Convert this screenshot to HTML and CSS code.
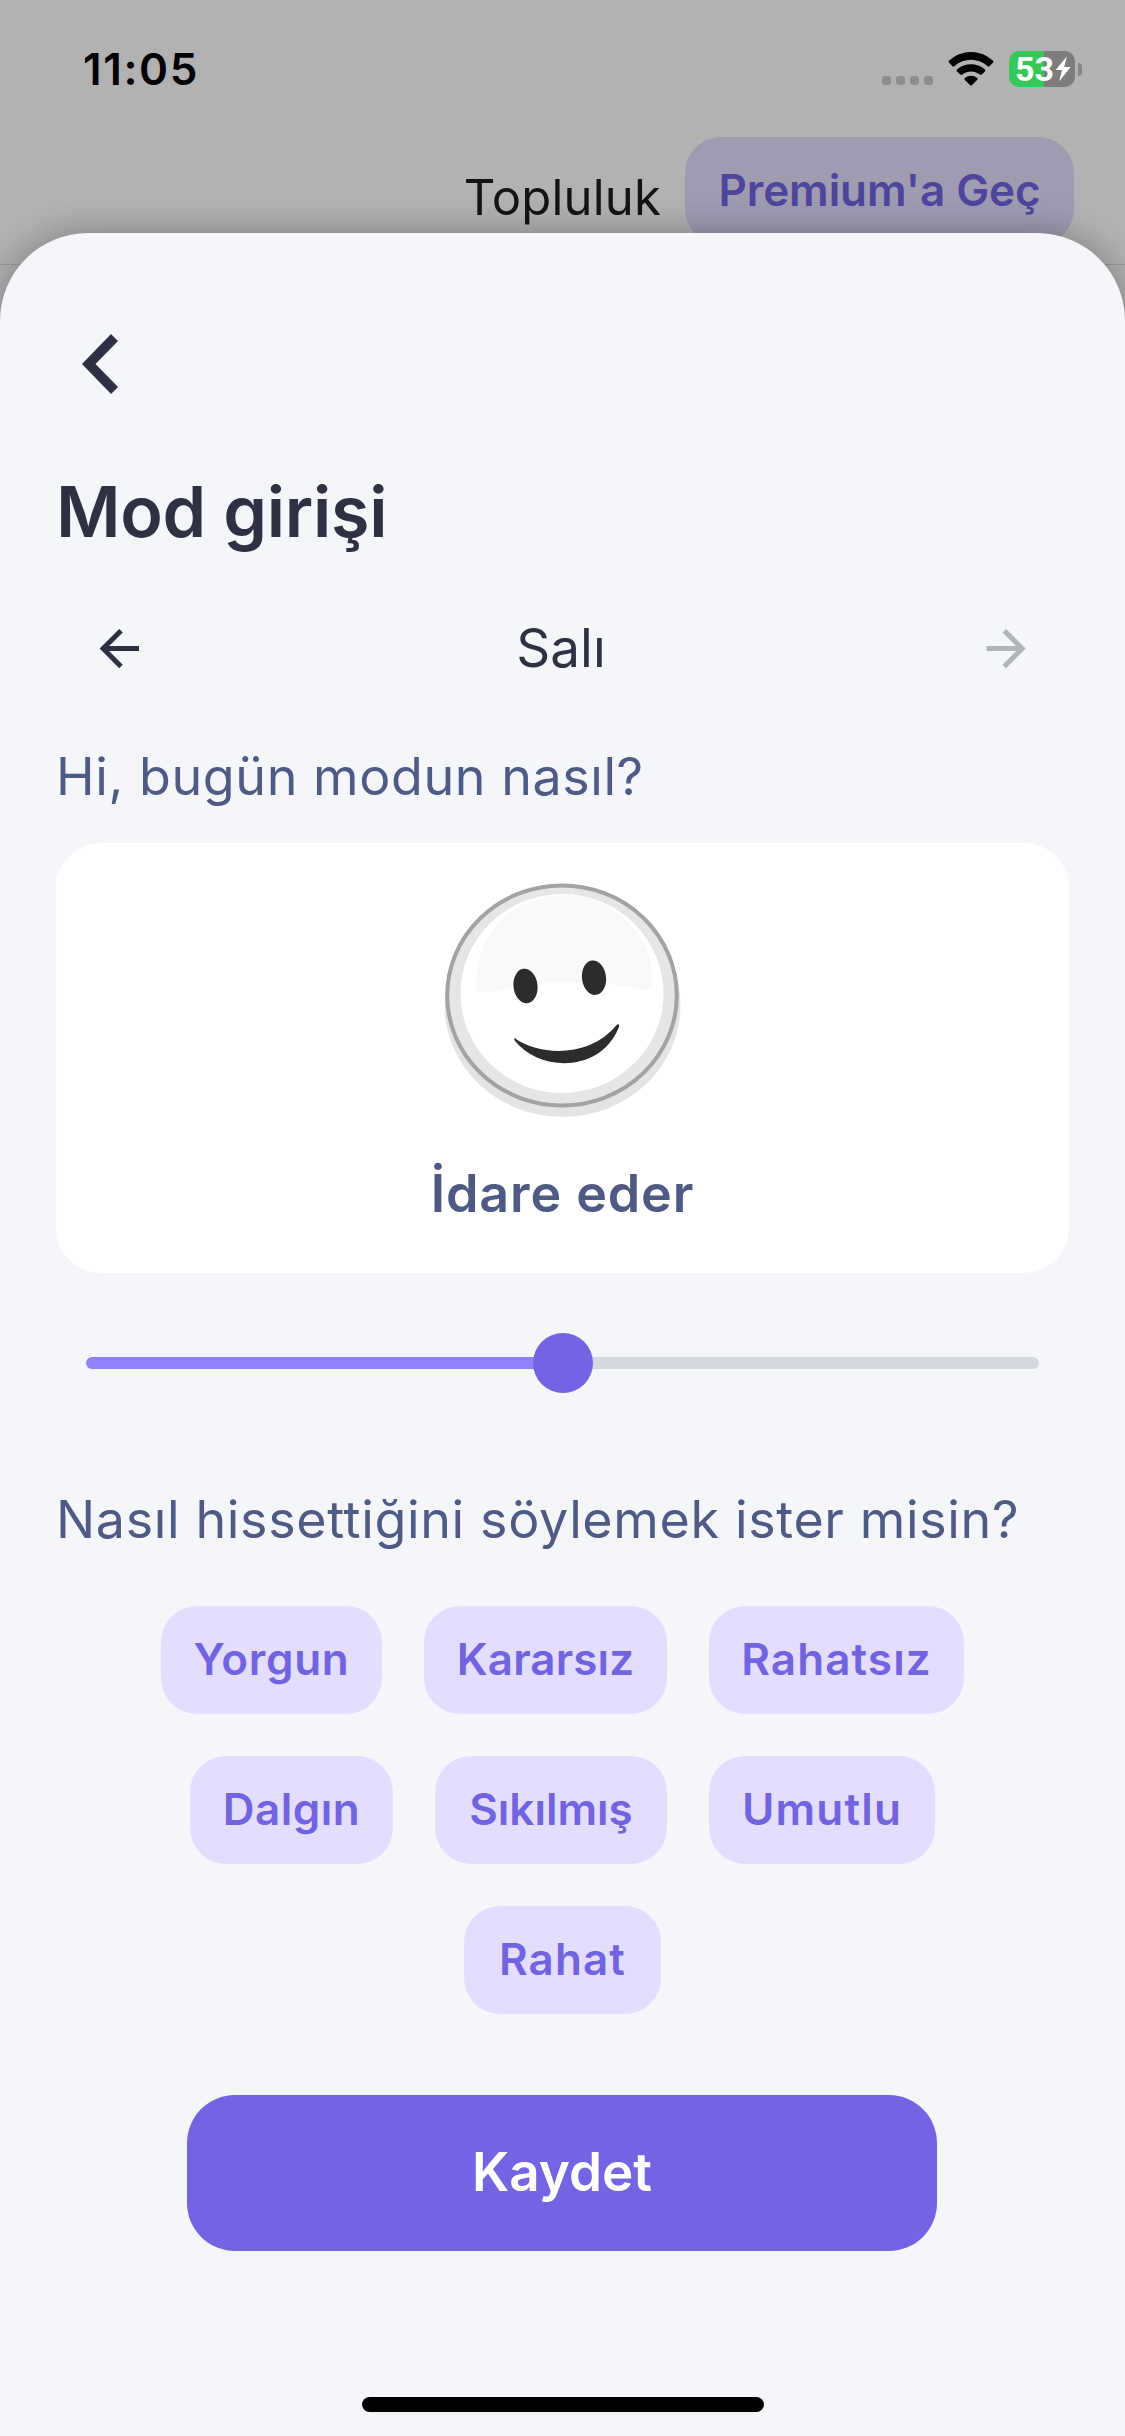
FILE: index.html
```html
<!DOCTYPE html>
<html lang="tr">
<head>
<meta charset="utf-8">
<title>Mod girişi</title>
<link rel="stylesheet" href="styles.css">
</head>
<body>
<div class="screen">
  <header class="status">
    <span class="time">11:05</span>
    <div class="indicators">
      <span class="signal"><i></i><i></i><i></i><i></i></span>
      <svg class="wifi" viewBox="0 0 46 34" width="46" height="34">
        <path d="M1.200 10.700Q0 9.700 1.200 8.600C14 -2.900 32 -2.900 44.800 8.600Q46 9.700 44.800 10.700L41.700 14Q40.700 15 39.500 14C30 5.600 16 5.600 6.500 14Q5.300 15 4.300 14Z"/>
        <path d="M9 19.400Q8 18.400 9.200 17.300C17 10.600 29 10.600 36.800 17.300Q38 18.400 37 19.400L33.700 22.600Q32.700 23.500 31.600 22.600C26.500 18.600 19.500 18.600 14.400 22.600Q13.300 23.500 12.300 22.600Z"/>
        <path d="M16.700 27.800Q15.700 26.800 16.900 25.900C20.500 23 25.500 23 29.100 25.900Q30.300 26.800 29.300 27.800L24 33Q23 34 22 33Z"/>
      </svg>
      <div class="battery">
        <div class="battery-body"><span class="battery-value">53</span>
          <svg class="bolt" viewBox="0 0 16 26" width="16" height="26"><path d="M11.800 0.500L0.600 14H7L4.200 25.500L15.600 11H9.200Z"/></svg>
        </div>
        <i class="battery-cap"></i>
      </div>
    </div>
  </header>
  <nav class="topbar">
    <span class="community">Topluluk</span>
    <span class="premium">Premium'a Geç</span>
  </nav>

  <main class="sheet">
    <svg class="back" viewBox="0 0 36 60" width="36" height="60"><path d="M29 0L36 7L13.500 30L36 53L29 60L0 30Z"/></svg>
    <h1 class="title">Mod girişi</h1>
    <div class="day">
      <svg class="arrow" viewBox="0 0 40 40" width="40" height="40"><path d="M40 19.600H6M22 1.700L4.100 19.600L22 37.500"/></svg>
      <span class="day-name">Salı</span>
      <svg class="arrow arrow-off" viewBox="0 0 40 40" width="40" height="40"><path d="M0.500 19.600H34M18.300 1.700L36.200 19.600L18.300 37.500"/></svg>
    </div>
    <h2 class="question">Hi, bugün modun nasıl?</h2>
    <section class="card">
      <svg class="face" viewBox="0 0 240 236" width="240" height="236">
        <ellipse cx="119.500" cy="122" rx="118" ry="112" fill="#e4e4e4"/>
        <ellipse cx="119" cy="112.500" rx="114.800" ry="110" fill="#e6e6e6" stroke="#a3a3a3" stroke-width="4"/>
        <ellipse cx="119" cy="110.500" rx="101.500" ry="99.500" fill="#fff"/>
        <path d="M33 107C31 60 60 15 119 12C180 13 208 60 210 93C210 103 206 107 196 107C170 96 80 96 53 108C45 109 38 109 33 107Z" fill="#f9f9f9"/>
        <ellipse cx="82.500" cy="103" rx="12" ry="17.300" transform="rotate(-7 82.500 103)" fill="#2c2c2c"/>
        <ellipse cx="151" cy="94.700" rx="12" ry="17.300" transform="rotate(-7 151 94.700)" fill="#2c2c2c"/>
        <path d="M71.500 155C98 174 148 174 173.500 142C176 140 177 142 175.500 145C157 190 97 189 72 158C71 156 71 155 71.500 155Z" fill="#2c2c2c"/>
      </svg>
      <p class="mood">İdare eder</p>
    </section>
    <div class="slider"><div class="slider-fill"></div><div class="knob"></div><div class="slider-rest"></div></div>
    <h2 class="question feelings-title">Nasıl hissettiğini söylemek ister misin?</h2>
    <div class="chips">
      <div class="chip-row"><span class="chip yorgun">Yorgun</span><span class="chip kararsiz">Kararsız</span><span class="chip rahatsiz">Rahatsız</span></div>
      <div class="chip-row"><span class="chip dalgin">Dalgın</span><span class="chip sikilmis">Sıkılmış</span><span class="chip umutlu">Umutlu</span></div>
      <div class="chip-row"><span class="chip rahat">Rahat</span></div>
    </div>
    <button class="save">Kaydet</button>
    <div class="home"></div>
  </main>
</div>
</body>
</html>
```
FILE: styles.css
```css
* { box-sizing: border-box; }
body { margin: 0; font-family: Inter, Roboto, sans-serif; }
h1, h2, p { margin: 0; font-weight: 400; }

.screen { width: 1125px; height: 2436px; display: flex; flex-direction: column; overflow: hidden;
  background: linear-gradient(#b2b2b2 264px, #9c9c9c 264px, #9c9c9c 265px, #b2b2b2 265px); }

.status { height: 137px; padding: 39px 43px 0 83px; display: flex; justify-content: space-between; align-items: flex-start; }
.time { font-size: 44px; font-weight: 600; line-height: 60px; letter-spacing: 1.6px; color: #000; }
.indicators { display: flex; align-items: flex-start; padding-top: 12px; }
.signal { display: flex; gap: 5px; padding-top: 25px; margin-right: 15px; }
.signal i { width: 9px; height: 9px; border-radius: 3px; background: #8e8e8e; }
.wifi { margin: 1px 15px 0 0; }
.battery { display: flex; align-items: center; gap: 3px; }
.battery-body { width: 66px; height: 36px; border-radius: 10px; display: flex; align-items: center; padding-left: 6px;
  background: linear-gradient(90deg, #34c759 35px, #7d7d7d 35px); }
.battery-value { width: 40px; font: 700 34px/36px Roboto, sans-serif; color: #fff; }
.bolt path { fill: #fff; }
.battery-cap { width: 4px; height: 13px; border-radius: 0 4px 4px 0; background: #858585; }

.topbar { height: 96px; padding-right: 51px; display: flex; justify-content: flex-end; align-items: flex-start; gap: 24px; }
.community { font-size: 49px; line-height: 60px; letter-spacing: .2px; margin-top: 31px; color: #141414; }
.premium { width: 389px; height: 108px; flex: none; border-radius: 36px; background: #9f9bb1; display: flex; justify-content: center;
  font-size: 44px; font-weight: 600; line-height: 107px; letter-spacing: -.1px; color: #50459d; }

.sheet { flex: none; height: 2203px; position: relative; border-radius: 88px 88px 0 0; background: #f4f6fa;
  box-shadow: 0 0 36px rgba(0, 0, 0, .3); padding: 101px 56px 24px; display: flex; flex-direction: column; }
.back { flex: none; margin-left: 26px; fill: #2e3142; }
.title { font-size: 70px; font-weight: 600; line-height: 90px; letter-spacing: -.3px; margin-top: 73px; color: #2e3142; }
.day { display: flex; justify-content: space-between; align-items: center; height: 80px; margin-top: 52px; padding: 0 43px; color: #2e3142; }
.day-name { font-size: 53px; line-height: 60px; padding: 0 3px 3px 0; }
.arrow { fill: none; stroke: #2e3142; stroke-width: 5; }
.arrow-off { stroke: #b1b4bb; }
.question { font-size: 52px; line-height: 60px; letter-spacing: .57px; margin-top: 58px; color: #4f5b84; white-space: nowrap; }
.card { height: 430px; margin-top: 36px; border-radius: 45px; background: #fff; display: flex; flex-direction: column; align-items: center; padding-top: 40px; }
.mood { font-size: 52px; font-weight: 600; line-height: 70px; letter-spacing: .9px; margin-top: 40px; color: #4e5a83; }
.slider { height: 60px; margin: 60px 30px 0; display: flex; align-items: center; }
.slider-fill, .slider-rest { flex: 1; height: 12px; }
.slider-fill { border-radius: 6px 0 0 6px; background: #8f81fa; }
.slider-rest { border-radius: 0 6px 6px 0; background: #d6d8e0; }
.knob { width: 60px; height: 60px; margin: 0 -1px; border-radius: 50%; background: #7264e3; z-index: 1; }
.feelings-title { margin-top: 97px; letter-spacing: .64px; }
.chips { display: flex; flex-direction: column; gap: 42px; margin-top: 56px; }
.chip-row { display: flex; justify-content: center; gap: 42px; }
.chip { height: 108px; border-radius: 36px; background: #e3deff; font-size: 44px; font-weight: 600; line-height: 107px; text-align: center; color: #7264e0; }
.yorgun { width: 221px; letter-spacing: .7px; }
.kararsiz { width: 243px; letter-spacing: .1px; }
.rahatsiz { width: 255px; letter-spacing: 1.1px; }
.dalgin { width: 203px; letter-spacing: .5px; }
.sikilmis { width: 232px; }
.umutlu { width: 226px; letter-spacing: 1.2px; }
.rahat { width: 197px; letter-spacing: 1.1px; }
.save { width: 750px; height: 156px; flex: none; align-self: center; margin: 81px 1px 0 0; padding: 0 0 2px; border: 0; border-radius: 48px;
  background: #7264e3; color: #fff; font: 600 53px Inter, sans-serif; }
.home { width: 402px; height: 15px; border-radius: 8px; background: #000; margin: auto auto 0; flex: none; }
```
